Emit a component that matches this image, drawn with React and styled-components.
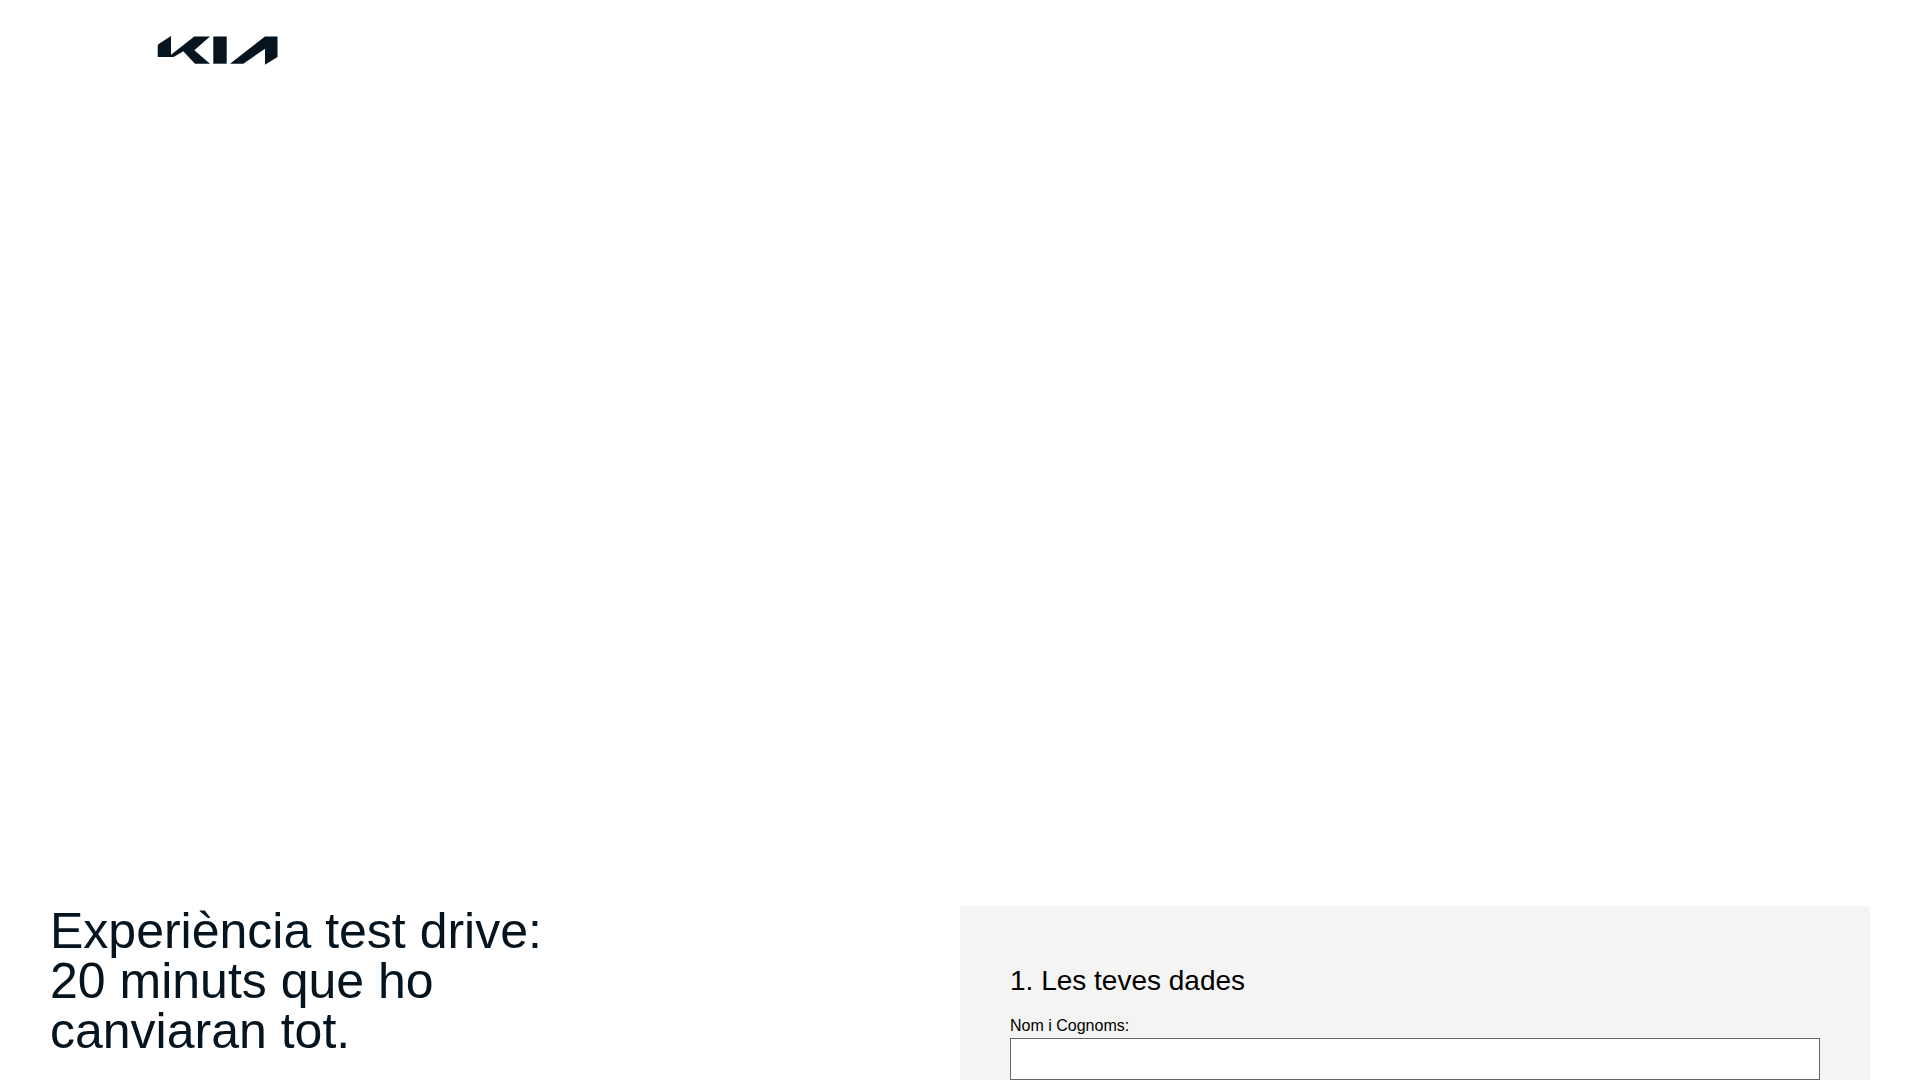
import React from "react";
import styled, { createGlobalStyle } from "styled-components";

const GlobalStyle = createGlobalStyle`
	html, body {
		margin: 0;
		height: 100%;
		overflow: hidden;
		background: #fff;
	}
	body {
		font-family: "Liberation Sans", Arial, sans-serif;
		color: #05141f;
	}
`;

const Page = styled.div`
	height: 1080px;
	overflow: hidden;
`;

const Header = styled.header`
	height: 100px;
	padding: 35px 0 0 157px;
	box-sizing: border-box;
`;

const Logo = styled.svg`
	display: block;
	width: 122px;
	height: 30px;
	fill: #05141f;
`;

const Hero = styled.div`
	height: 806px;
`;

const Content = styled.section`
	display: grid;
	grid-template-columns: 910px 910px;
	padding: 0 50px;
`;

const Title = styled.h1`
	margin: 0;
	font-size: 50px;
	line-height: 50px;
	font-weight: 400;
	color: #05141f;
`;

const FormPanel = styled.form`
	background: #f4f4f2;
	padding: 50px 50px 40px;
	color: #000;
`;

const StepTitle = styled.h2`
	margin: 0 0 11px;
	font-size: 28px;
	line-height: 50px;
	font-weight: 400;
`;

const Label = styled.label`
	display: block;
	font-size: 16px;
	line-height: 18px;
	margin-bottom: 3px;
`;

const TextInput = styled.input`
	display: block;
	width: 100%;
	height: 42px;
	box-sizing: border-box;
	border: 1px solid #666;
	background: #fff;
	border-radius: 0;
	padding: 0 10px;
	outline: none;
`;

export default function App() {
	return (
		<Page>
			<GlobalStyle />
			<Header>
				<Logo viewBox="0 0 122 30" aria-label="Kia">
					<path d="M0.7 11 Q0.7 9.7 2 8.8 L14 1 V19.7 L37.3 1.5 H53 L37.3 15.3 L53 28.7 H38 L26.3 16.3 L17.5 21.5 Q16.5 22 15.5 22 H0.7 Z" />
					<path d="M56.3 1.5 H69.7 V28.7 H56.3 Z" />
					<path d="M73 28.7 L108 1.5 H120.5 V22 L108 29.7 V13.7 L86.3 28.7 Z" />
				</Logo>
			</Header>
			<Hero />
			<Content>
				<Title>
					Experiència test drive:
					<br />
					20 minuts que ho
					<br />
					canviaran tot.
				</Title>
				<FormPanel>
					<StepTitle>1. Les teves dades</StepTitle>
					<Label htmlFor="nom">Nom i Cognoms:</Label>
					<TextInput id="nom" type="text" />
				</FormPanel>
			</Content>
		</Page>
	);
}
